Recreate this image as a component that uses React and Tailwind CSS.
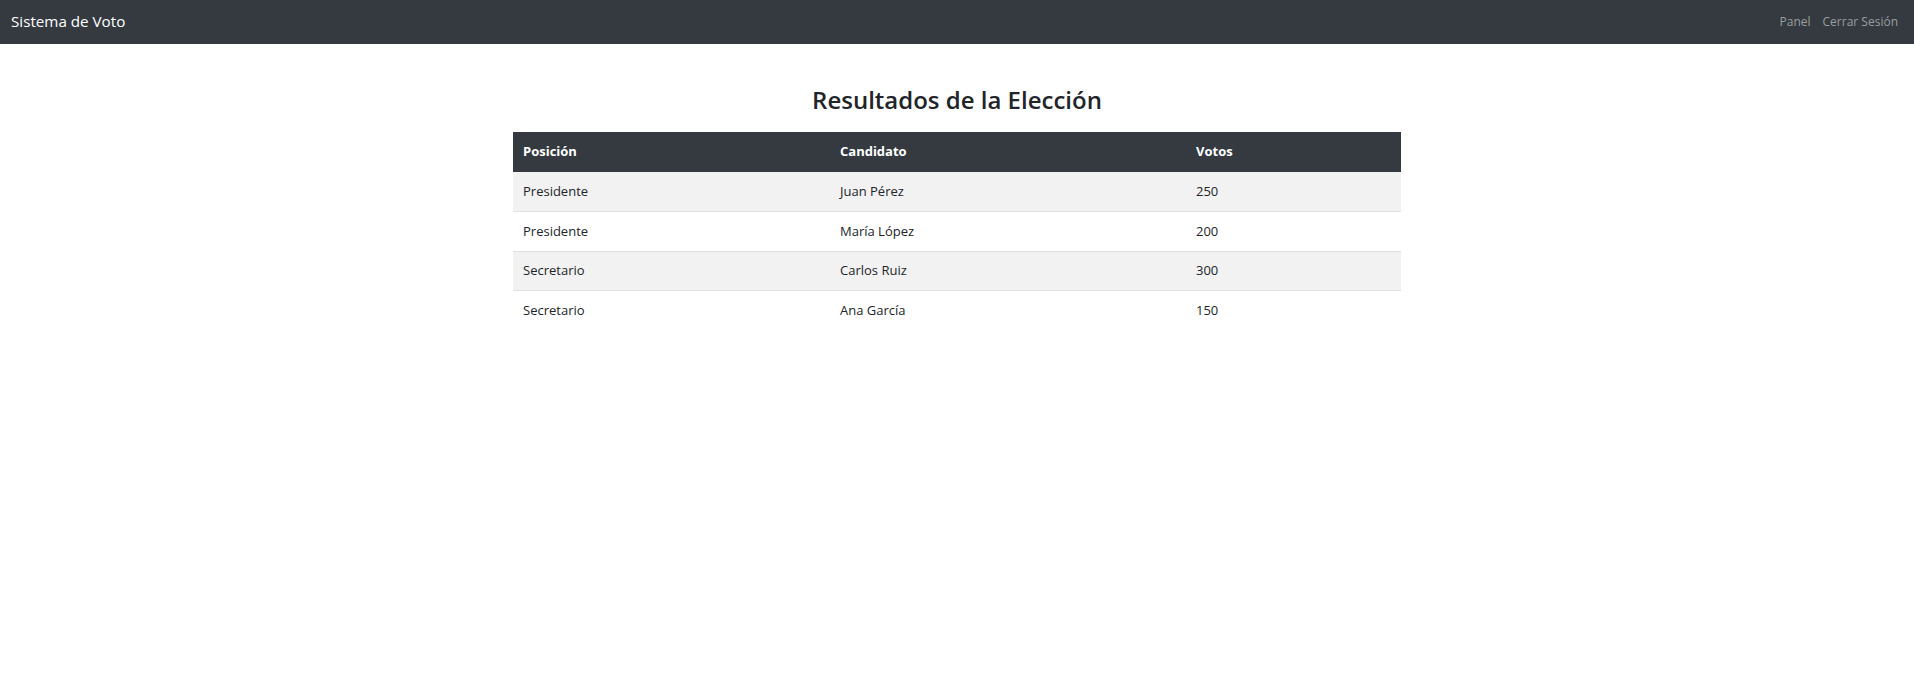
import React from "react";

const rows = [
  ["Presidente", "Juan Pérez", "250"],
  ["Presidente", "María López", "200"],
  ["Secretario", "Carlos Ruiz", "300"],
  ["Secretario", "Ana García", "150"],
];

export default function App() {
  return (
    <div className="min-h-screen bg-white text-[#212529]" style={{ fontFamily: "'Open Sans', 'Noto Sans', sans-serif" }}>
      <nav className="h-[44px] bg-[#343a40] flex items-center justify-between pl-[11px] pr-[16px]">
        <span className="text-[15.2px] text-white leading-none">Sistema de Voto</span>
        <div className="flex items-center gap-[12px] text-[12px] text-[#9a9da0]">
          <span>Panel</span>
          <span>Cerrar Sesión</span>
        </div>
      </nav>
      <div className="w-[888px] mx-auto pt-[36px]">
        <h1 className="text-center text-[24px] font-semibold leading-[40px] h-[52px]">Resultados de la Elección</h1>
        <table className="w-full border-collapse text-[13px]">
          <thead>
            <tr className="bg-[#343a40] text-white h-[40px]">
              <th className="w-[317px] text-left font-bold px-[10px]">Posición</th>
              <th className="w-[356px] text-left font-bold px-[10px]">Candidato</th>
              <th className="text-left font-bold px-[10px]">Votos</th>
            </tr>
          </thead>
          <tbody>
            {rows.map((r, i) => (
              <tr key={i} className={(i % 2 === 0 ? "bg-[#f2f2f2]" : "bg-white") + (i < rows.length - 1 ? " border-b border-[#dee2e6]" : "") + " h-[39.5px]"}>
                <td className="px-[10px]">{r[0]}</td>
                <td className="px-[10px]">{r[1]}</td>
                <td className="px-[10px]">{r[2]}</td>
              </tr>
            ))}
          </tbody>
        </table>
      </div>
    </div>
  );
}
